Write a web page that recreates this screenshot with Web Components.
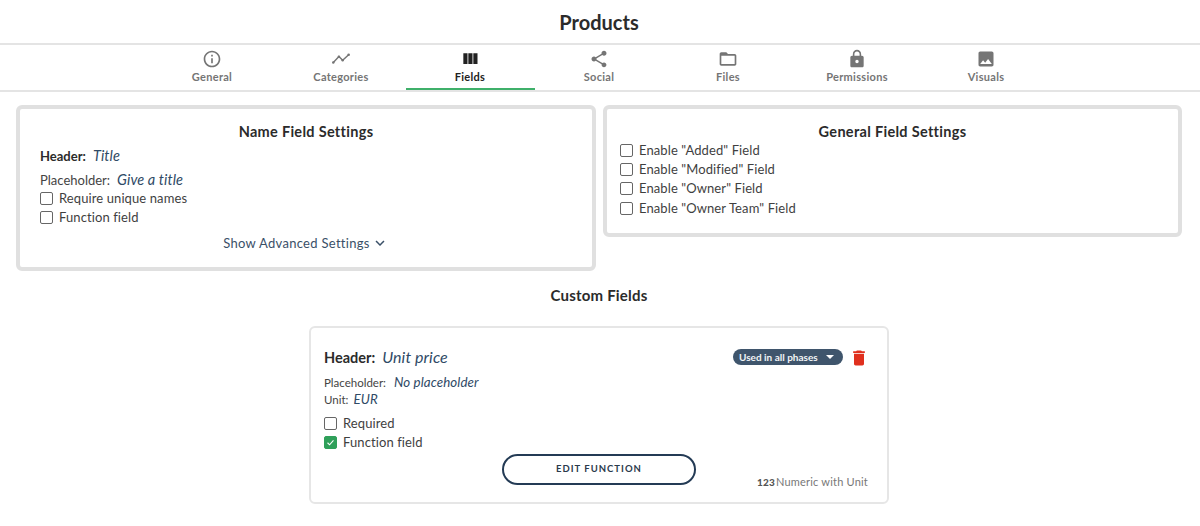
<!DOCTYPE html>
<html>
<head>
<meta charset="utf-8">
<title>Products</title>
<style>
  html, body { margin: 0; background: #fff; }
  body { font-family: Lato, "Open Sans", sans-serif; color: #333; overflow: hidden; }
</style>
</head>
<body>
<products-page></products-page>

<script>
const ICONS = {
  info: '<path d="M11 7h2v2h-2zm0 4h2v6h-2zm1-9C6.48 2 2 6.48 2 12s4.48 10 10 10 10-4.48 10-10S17.52 2 12 2zm0 18c-4.41 0-8-3.59-8-8s3.59-8 8-8 8 3.59 8 8-3.59 8-8 8z"/>',
  timeline: '<path d="M2.5 16.5L9.5 9l4.5 4.5 7.5-7" fill="none" stroke="currentColor" stroke-width="1.7"/><circle cx="2.7" cy="16.3" r="1.5"/><circle cx="9.5" cy="9.2" r="1.5"/><circle cx="14" cy="13.4" r="1.5"/><circle cx="21.2" cy="6.8" r="1.5"/>',
  columns: '<path d="M10 18h5V5h-5v13zm-6 0h5V5H4v13zM16 5v13h5V5h-5z"/>',
  share: '<path d="M18 16.08c-.76 0-1.44.3-1.96.77L8.91 12.7c.05-.23.09-.46.09-.7s-.04-.47-.09-.7l7.05-4.11c.54.5 1.25.81 2.04.81 1.66 0 3-1.34 3-3s-1.34-3-3-3-3 1.34-3 3c0 .24.04.47.09.7L8.04 9.81C7.5 9.31 6.79 9 6 9c-1.66 0-3 1.34-3 3s1.34 3 3 3c.79 0 1.5-.31 2.04-.81l7.12 4.16c-.05.21-.08.43-.08.65 0 1.61 1.31 2.92 2.92 2.92 1.61 0 2.92-1.31 2.92-2.92s-1.31-2.92-2.92-2.92z"/>',
  folder: '<path d="M20 6h-8l-2-2H4c-1.1 0-1.99.9-1.99 2L2 18c0 1.1.9 2 2 2h16c1.1 0 2-.9 2-2V8c0-1.1-.9-2-2-2zm0 12H4V8h16v10z"/>',
  lock: '<path d="M18 8h-1V6c0-2.76-2.24-5-5-5S7 3.24 7 6v2H6c-1.1 0-2 .9-2 2v10c0 1.1.9 2 2 2h12c1.1 0 2-.9 2-2V10c0-1.1-.9-2-2-2zm-6 9c-1.1 0-2-.9-2-2s.9-2 2-2 2 .9 2 2-.9 2-2 2zm3.1-9H8.9V6c0-1.71 1.39-3.1 3.1-3.1 1.71 0 3.1 1.39 3.1 3.1v2z"/>',
  image: '<path d="M21 19V5c0-1.1-.9-2-2-2H5c-1.1 0-2 .9-2 2v14c0 1.1.9 2 2 2h14c1.1 0 2-.9 2-2zM8.5 13.5l2.5 3.01L14.5 12l4.5 6H5l3.5-4.5z"/>',
  trash: '<path d="M6 19c0 1.1.9 2 2 2h8c1.1 0 2-.9 2-2V7H6v12zM19 4h-3.5l-1-1h-5l-1 1H5v2h14V4z"/>',
  chevron: '<path d="M16.59 8.59L12 13.17 7.41 8.59 6 10l6 6 6-6z"/>'
};

const svg = (name, size) => `<svg width="${size}" height="${size}" viewBox="0 0 24 24" fill="currentColor">${ICONS[name]}</svg>`;

class TabItem extends HTMLElement {
  constructor() {
    super();
    this.attachShadow({mode: 'open'});
  }

  connectedCallback() {
    const active = this.hasAttribute('active');
    this.shadowRoot.innerHTML = `
      <style>
        :host {
          display: flex;
          flex-direction: column;
          align-items: center;
          width: 129px;
          height: 45px;
          box-sizing: border-box;
          padding-top: 4px;
          color: ${active ? '#222' : '#757575'};
          border-bottom: 2px solid ${active ? '#3fb06a' : 'transparent'};
          margin-bottom: -1px;
        }
        svg { display: block; }
        span { font-size: 11px; font-weight: 700; line-height: 14px; letter-spacing: .3px; margin-top: 1px; }
      </style>
      ${svg(this.getAttribute('icon'), 20)}
      <span><slot></slot></span>
    `;
  }
}

class TabBar extends HTMLElement {
  constructor() {
    super();
    this.attachShadow({mode: 'open'});
    this.shadowRoot.innerHTML = `
      <style>
        :host {
          display: flex;
          justify-content: center;
          height: 45px;
          padding-right: 2px;
          border-top: 2px solid #e4e4e4;
          border-bottom: 2px solid #e4e4e4;
        }
      </style>
      <slot></slot>
    `;
  }
}

class CheckRow extends HTMLElement {
  constructor() {
    super();
    this.attachShadow({mode: 'open'});
  }

  connectedCallback() {
    const checked = this.hasAttribute('checked');
    this.shadowRoot.innerHTML = `
      <style>
        :host {
          display: flex;
          align-items: center;
          height: 19.3px;
          font-size: 13px;
          letter-spacing: .1px;
          color: #3f3f3f;
        }
        .box {
          width: 11px;
          height: 11px;
          margin-right: 6px;
          margin-top: 1px;
          border-radius: 2px;
          border: 1px solid ${checked ? '#2fa05a' : '#666'};
          background: ${checked ? '#2fa05a' : '#fff'};
          display: flex;
          flex: none;
        }
      </style>
      <span class="box">${checked ? '<svg width="11" height="11" viewBox="0 0 13 13" fill="none" stroke="#fff" stroke-width="1.3"><path d="M3 6.8l2.4 2.4L10 4"/></svg>' : ''}</span>
      <slot></slot>
    `;
  }
}

class SettingsPanel extends HTMLElement {
  constructor() {
    super();
    this.attachShadow({mode: 'open'});
  }

  connectedCallback() {
    const pad = this.getAttribute('pad') || '20';
    this.shadowRoot.innerHTML = `
      <style>
        :host {
          display: block;
          box-sizing: border-box;
          flex: none;
          border: 4px solid #e0e0e0;
          border-radius: 6px;
          padding: 13px ${pad}px 0;
          background: #fff;
        }
        h3 {
          margin: 0 0 -2px;
          text-align: center;
          font-size: 14.5px;
          font-weight: 700;
          line-height: 20px;
          color: #2b2b2b;
          letter-spacing: .3px;
        }
      </style>
      <h3>${this.getAttribute('heading')}</h3>
      <slot></slot>
    `;
  }
}

class ValueLine extends HTMLElement {
  constructor() {
    super();
    this.attachShadow({mode: 'open'});
  }

  connectedCallback() {
    const size = this.getAttribute('size') || '13';
    const vsize = this.getAttribute('vsize') || '14.5';
    const bold = this.hasAttribute('bold');
    const h = this.getAttribute('h') || '24';
    const gap = this.getAttribute('gap') || '7';
    this.shadowRoot.innerHTML = `
      <style>
        :host {
          display: flex;
          align-items: baseline;
          height: ${h}px;
          gap: ${gap}px;
        }
        b {
          font-size: ${size}px;
          font-weight: ${bold ? 700 : 400};
          color: ${bold ? '#2b2b2b' : '#444'};
        }
        i {
          font-size: ${vsize}px;
          color: #2f4a66;
          letter-spacing: .1px;
        }
      </style>
      <b>${this.getAttribute('label')}</b><i><slot></slot></i>
    `;
  }
}

class FieldCard extends HTMLElement {
  constructor() {
    super();
    this.attachShadow({mode: 'open'});
    this.shadowRoot.innerHTML = `
      <style>
        :host {
          display: block;
          box-sizing: border-box;
          width: 580px;
          height: 178px;
          margin: 0 auto;
          border: 2px solid #e6e6e6;
          border-radius: 6px;
          padding: 17px 13px 0;
          position: relative;
        }
        .top { display: flex; justify-content: space-between; align-items: center; height: 26px; margin-bottom: 3px; }
        .right { display: flex; align-items: center; gap: 6px; padding-right: 5px; }
        .pill {
          display: flex;
          align-items: center;
          justify-content: space-between;
          box-sizing: border-box;
          width: 110px;
          height: 16px;
          margin-bottom: 2px;
          padding: 0 9px 0 6px;
          border-radius: 8px;
          background: #3f556c;
          color: #f2f4f6;
          font-size: 10px;
          font-weight: 700;
        }
        .caret { width: 0; height: 0; border: 4px solid transparent; border-top: 4px solid #fff; border-bottom: 0; }
        .trash { color: #e0301e; display: flex; }
        .checks { margin-top: 5px; }
        .foot { display: flex; justify-content: center; margin-top: 2px; }
        button {
          width: 194px;
          height: 31px;
          border: 2px solid #243b55;
          border-radius: 16px;
          background: #fff;
          color: #2a3a4c;
          font: 700 9.5px Lato, sans-serif;
          letter-spacing: 1px;
          padding: 0 0 2px;
        }
        .type {
          position: absolute;
          right: 19px;
          bottom: 14px;
          font-size: 11px;
          color: #777;
          letter-spacing: .2px;
          display: flex;
          gap: 1px;
          align-items: baseline;
        }
        .type b { color: #555; font-weight: 900; font-size: 10px; }
      </style>
      <div class="top">
        <slot name="title"></slot>
        <div class="right">
          <span class="pill">Used in all phases<span class="caret"></span></span>
          <span class="trash">${svg('trash', 20)}</span>
        </div>
      </div>
      <slot></slot>
      <div class="checks"><slot name="checks"></slot></div>
      <div class="foot"><button>EDIT FUNCTION</button></div>
      <div class="type"><b>123</b>Numeric with Unit</div>
    `;
  }
}

class ProductsPage extends HTMLElement {
  constructor() {
    super();
    this.attachShadow({mode: 'open'});
    this.shadowRoot.innerHTML = `
      <style>
        :host { display: block; width: 1200px; height: 526px; }
        h1 {
          margin: 0;
          height: 43px;
          padding-right: 2px;
          text-align: center;
          font-size: 20px;
          font-weight: 700;
          line-height: 44px;
          color: #2b2b2b;
        }
        .panels {
          display: flex;
          align-items: flex-start;
          gap: 7px;
          padding: 13px 18px 0 16px;
        }
        .left { width: 580px; height: 166px; }
        .right { width: 579px; height: 132px; }
        .name-lines { padding-top: 7px; }
        .adv {
          display: flex;
          justify-content: center;
          align-items: center;
          gap: 1px;
          margin-top: 7px;
          font-size: 13px;
          letter-spacing: .3px;
          color: #3a5068;
        }
        .custom { padding-right: 2px; }
        h2 {
          margin: 14px 0 21px;
          text-align: center;
          font-size: 15px;
          font-weight: 700;
          line-height: 20px;
          color: #2b2b2b;
          letter-spacing: .2px;
        }
      </style>
      <h1>Products</h1>
      <tab-bar>
        <tab-item icon="info">General</tab-item>
        <tab-item icon="timeline">Categories</tab-item>
        <tab-item icon="columns" active>Fields</tab-item>
        <tab-item icon="share">Social</tab-item>
        <tab-item icon="folder">Files</tab-item>
        <tab-item icon="lock">Permissions</tab-item>
        <tab-item icon="image">Visuals</tab-item>
      </tab-bar>
      <div class="panels">
        <settings-panel class="left" heading="Name Field Settings">
          <div class="name-lines">
            <value-line label="Header:" bold>Title</value-line>
            <value-line label="Placeholder:" h="17">Give a title</value-line>
          </div>
          <check-row>Require unique names</check-row>
          <check-row>Function field</check-row>
          <div class="adv">Show Advanced Settings ${svg('chevron', 18)}</div>
        </settings-panel>
        <settings-panel class="right" pad="13" heading="General Field Settings">
          <check-row>Enable "Added" Field</check-row>
          <check-row>Enable "Modified" Field</check-row>
          <check-row>Enable "Owner" Field</check-row>
          <check-row>Enable "Owner Team" Field</check-row>
        </settings-panel>
      </div>
      <div class="custom">
        <h2>Custom Fields</h2>
        <field-card>
          <value-line slot="title" label="Header:" bold size="14.5" vsize="16" h="22">Unit price</value-line>
          <value-line label="Placeholder:" size="11.5" vsize="13.3" h="17" gap="8">No placeholder</value-line>
          <value-line label="Unit:" size="11.5" vsize="13.3" h="17" gap="5">EUR</value-line>
          <check-row slot="checks">Required</check-row>
          <check-row slot="checks" checked>Function field</check-row>
        </field-card>
      </div>
    `;
  }
}

customElements.define('tab-item', TabItem);
customElements.define('tab-bar', TabBar);
customElements.define('check-row', CheckRow);
customElements.define('settings-panel', SettingsPanel);
customElements.define('value-line', ValueLine);
customElements.define('field-card', FieldCard);
customElements.define('products-page', ProductsPage);
</script>
</body>
</html>
